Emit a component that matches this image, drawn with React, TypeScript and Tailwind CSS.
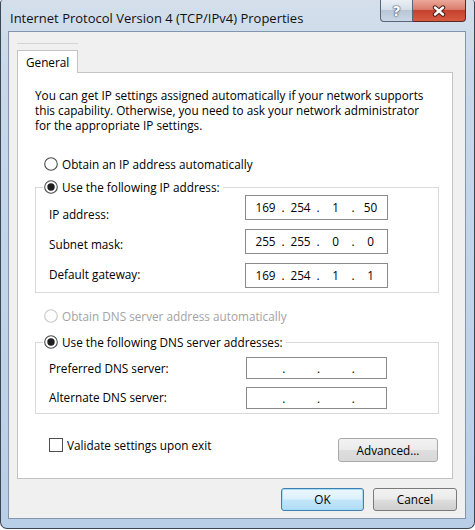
import React from "react";

function Radio({ checked = false, disabled = false }: { checked?: boolean; disabled?: boolean }) {
  const ring = disabled ? "#c8c8c8" : "#4a4a4a";
  return (
    <svg width="14" height="14" viewBox="0 0 14 14" className="block shrink-0">
      <circle cx="7" cy="7" r="6.3" fill="#fdfdfd" stroke={ring} strokeWidth="1.1" />
      {checked && <circle cx="7" cy="7" r="3.7" fill="#1e1e1e" />}
    </svg>
  );
}

function IpBox({ values, className }: { values: string[]; className: string }) {
  return (
    <div className={className}>
      {values.map((v, i) => (
        <React.Fragment key={i}>
          <span className="w-[31px] text-center">{v}</span>
          {i < 3 && <span className="w-[4px] text-center">.</span>}
        </React.Fragment>
      ))}
    </div>
  );
}

export default function App() {
  return (
    <div className="w-[475px] h-[530px] bg-white font-['Open_Sans','Noto_Sans',sans-serif] text-[11.75px] leading-[15px] text-black">
      <div className="w-[475px] h-[529px] flex flex-col rounded-b-[7px] rounded-t-[3px] border-x border-b border-[#3b4655] bg-[linear-gradient(180deg,#d4dfeb_0%,#c8d8e9_15%,#b9cfe7_100%)]">
        {/* title bar */}
        <div className="h-[31px] shrink-0 flex items-start">
          <div className="pl-[9px] pt-[10px] text-[13px] leading-[16px] text-[#111]">
            Internet Protocol Version 4 (TCP/IPv4) Properties
          </div>
          <div className="ml-auto mr-[8px] flex">
            <div className="w-[33px] h-[22px] flex items-center justify-center border border-t-0 border-[#56667b] rounded-bl-[4px] bg-[linear-gradient(180deg,#eaeff5_0%,#d6dfe9_45%,#b8c6d6_50%,#cad7e5_100%)]">
              <span className="text-white font-bold text-[14px] leading-none font-['DejaVu_Sans',sans-serif] [text-shadow:0_0_2px_#2b384a,0_0_1px_#2b384a]">
                ?
              </span>
            </div>
            <div className="w-[53px] h-[22px] flex items-center justify-center border border-t-0 border-l-0 border-[#5a2a22] rounded-br-[4px] bg-[linear-gradient(180deg,#eba899_0%,#da7d6e_45%,#c5412f_50%,#d55a40_100%)]">
              <svg width="16" height="12" viewBox="0 0 16 12">
                <path d="M4 2.5 L12 9.5 M12 2.5 L4 9.5" stroke="#4a1c14" strokeWidth="4.4" strokeLinecap="round" />
                <path d="M4 2.5 L12 9.5 M12 2.5 L4 9.5" stroke="#ffffff" strokeWidth="2.5" strokeLinecap="round" />
              </svg>
            </div>
          </div>
        </div>

        {/* client area */}
        <div className="ml-[7px] w-[458px] h-[488px] shrink-0 border border-[#8195ac] bg-[#f0f0f0] flex flex-col">
          <div className="ml-[8px] mt-[11px] w-[61px] h-px bg-[#d4d4d4]" />
          <div className="relative z-10 ml-[8px] mt-[6px] -mb-px w-[61px] h-[23px] border border-b-0 border-[#c4c4c4] bg-white flex items-center pl-[8px]">
            General
          </div>
          <div className="ml-[8px] w-[436px] h-[407px] shrink-0 border border-[#c4c4c4] bg-white flex flex-col">
            <p className="pl-[17px] pt-[15px]">
              You can get IP settings assigned automatically if your network supports
              <br />
              this capability. Otherwise, you need to ask your network administrator
              <br />
              for the appropriate IP settings.
            </p>

            <div className="mt-[23px] ml-[26px] h-[16px] flex items-center gap-[4px]">
              <Radio />
              <span>Obtain an IP address automatically</span>
            </div>

            <fieldset className="mt-[7px] ml-[17px] w-[404px] border border-[#d9d9d9] pb-[4px]">
              <legend className="ml-[7px] pl-[1px] pr-[3px] h-[16px] flex items-center gap-[4px]">
                <Radio checked />
                <span>Use the following IP address:</span>
              </legend>
              <div className="flex">
                <div className="pl-[13px] pt-[12px] flex flex-col gap-[15px]">
                  <span>IP address:</span>
                  <span>Subnet mask:</span>
                  <span>Default gateway:</span>
                </div>
                <div className="ml-auto mr-[50px] flex flex-col gap-[9px]">
                  <IpBox values={["169", "254", "1", "50"]} className="w-[143px] h-[25px] border border-[#8a8a8a] bg-white flex items-center pl-[4px]" />
                  <IpBox values={["255", "255", "0", "0"]} className="w-[143px] h-[25px] border border-[#8a8a8a] bg-white flex items-center pl-[4px]" />
                  <IpBox values={["169", "254", "1", "1"]} className="w-[143px] h-[25px] border border-[#8a8a8a] bg-white flex items-center pl-[4px]" />
                </div>
              </div>
            </fieldset>

            <div className="mt-[15px] ml-[26px] h-[16px] flex items-center gap-[4px] text-[#a3a3a3]">
              <Radio disabled />
              <span>Obtain DNS server address automatically</span>
            </div>

            <fieldset className="mt-[10px] ml-[17px] w-[404px] border border-[#d9d9d9] pb-[4px]">
              <legend className="ml-[7px] pl-[1px] pr-[3px] h-[16px] flex items-center gap-[4px]">
                <Radio checked />
                <span>Use the following DNS server addresses:</span>
              </legend>
              <div className="flex">
                <div className="pl-[13px] pt-[11px] flex flex-col gap-[14px]">
                  <span>Preferred DNS server:</span>
                  <span>Alternate DNS server:</span>
                </div>
                <div className="ml-auto mr-[51px] pt-[7px] flex flex-col gap-[8px]">
                  <IpBox values={["", "", "", ""]} className="w-[141px] h-[22px] border border-[#8a8a8a] bg-white flex items-center pl-[4px]" />
                  <IpBox values={["", "", "", ""]} className="w-[141px] h-[22px] border border-[#8a8a8a] bg-white flex items-center pl-[4px]" />
                </div>
              </div>
            </fieldset>

            <div className="mt-[24px] flex items-start">
              <div className="ml-[31px] h-[14px] flex items-center gap-[4px]">
                <div className="w-[14px] h-[14px] border border-[#4f4f4f] bg-white" />
                <span>Validate settings upon exit</span>
              </div>
              <div className="ml-auto mr-[14px] w-[100px] h-[24px] rounded-[3px] border border-[#a9a9a9] bg-[linear-gradient(180deg,#f2f2f2_0%,#ebebeb_48%,#dedede_52%,#d8d8d8_100%)] flex items-center justify-center">
                Advanced...
              </div>
            </div>
          </div>

          <div className="mt-[9px] pr-[8px] flex justify-end gap-[9px]">
            <div className="w-[83px] h-[23px] rounded-[3px] border border-[#3c7fb1] bg-[linear-gradient(180deg,#ecf7fd_0%,#dcf1fc_48%,#c2e6fb_52%,#b0dcf5_100%)] shadow-[inset_0_0_0_1px_#a8dcf5] flex items-center justify-center">
              OK
            </div>
            <div className="w-[84px] h-[23px] rounded-[3px] border border-[#7a7a7a] bg-[linear-gradient(180deg,#f2f2f2_0%,#ebebeb_48%,#dddddd_52%,#cfcfcf_100%)] flex items-center justify-center">
              Cancel
            </div>
          </div>
        </div>
      </div>
    </div>
  );
}
